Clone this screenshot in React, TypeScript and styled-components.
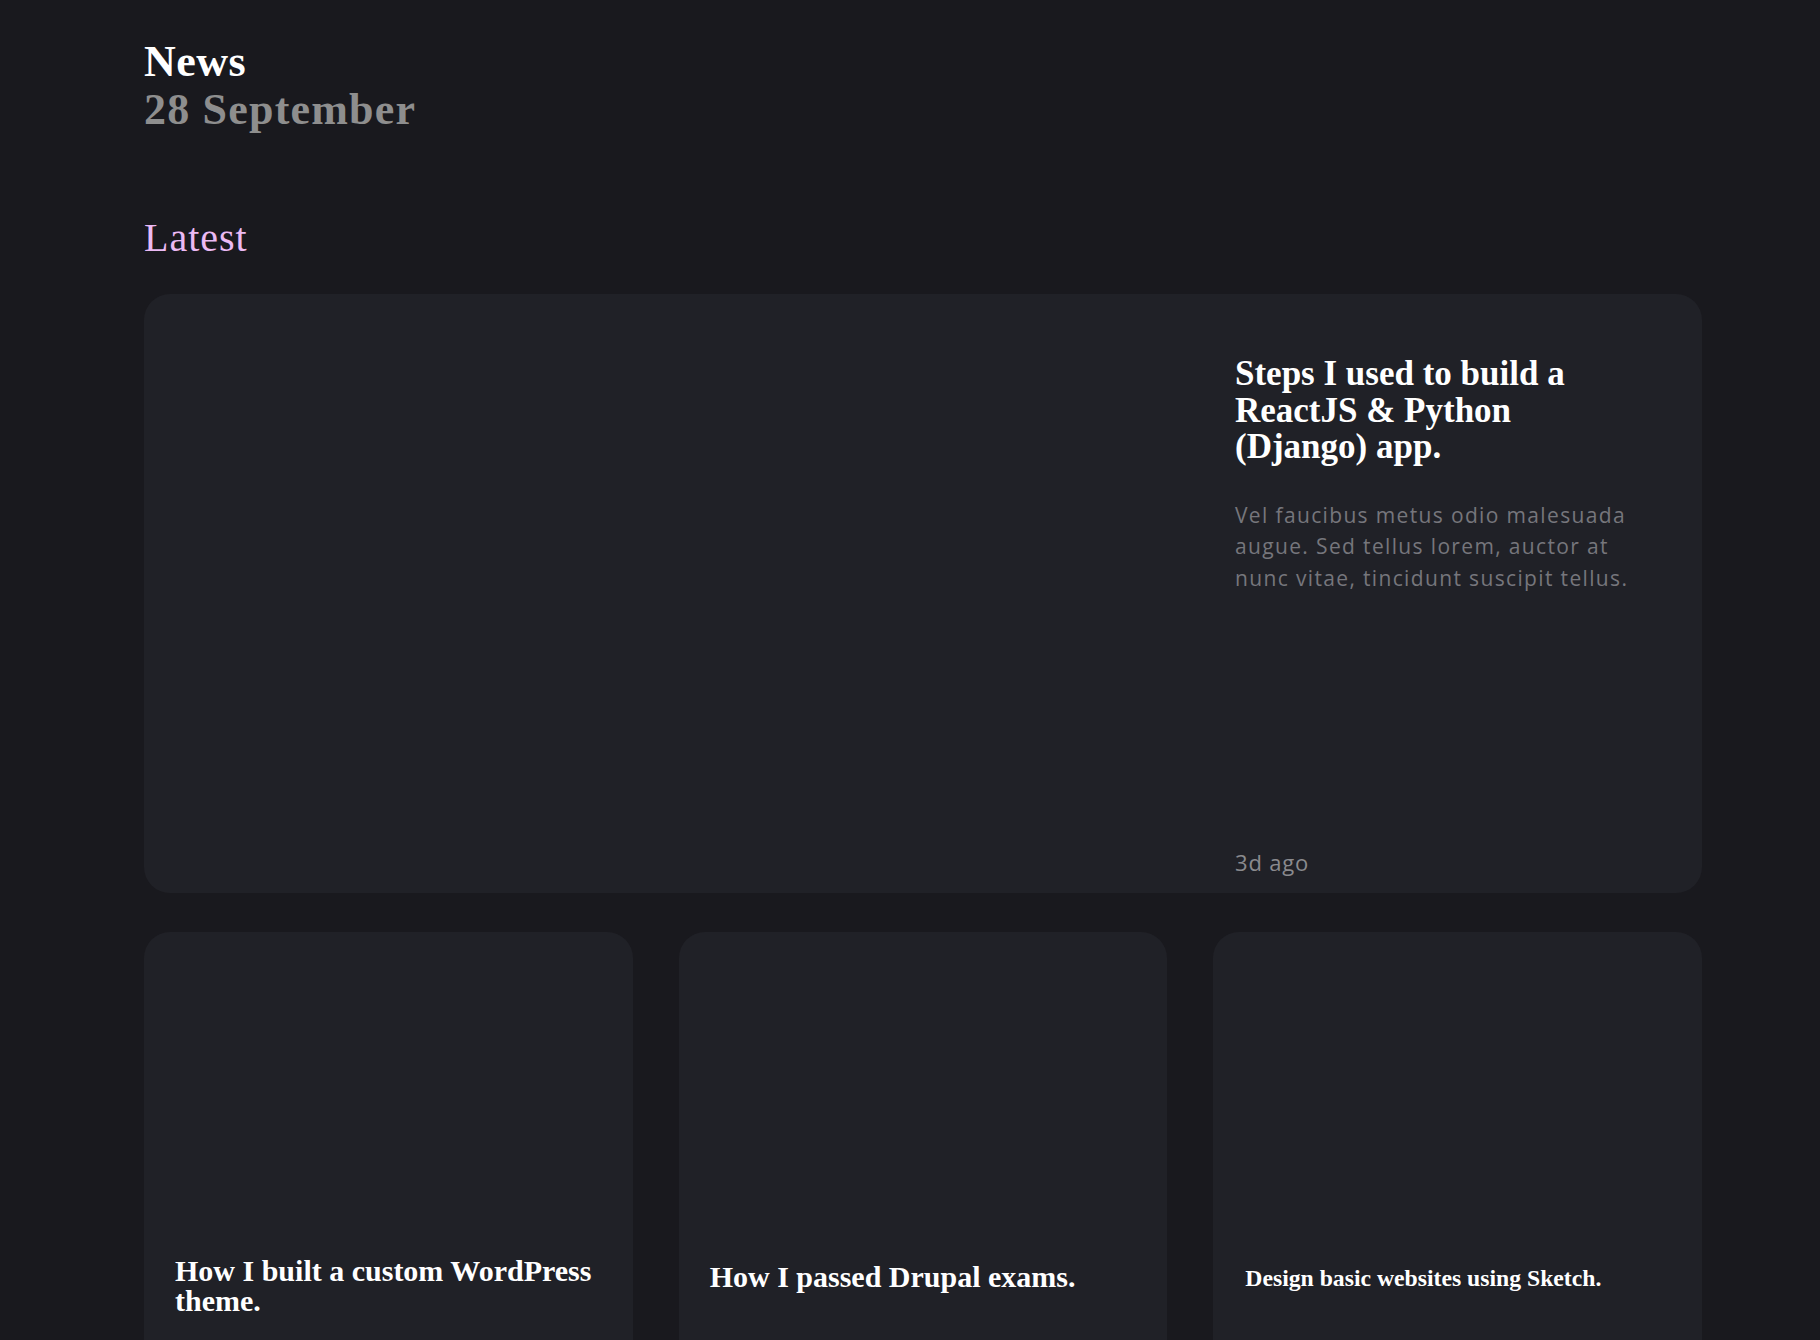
import React from "react";
import styled, { createGlobalStyle } from "styled-components";

const GlobalStyle = createGlobalStyle`
  html, body {
    margin: 0;
    padding: 0;
    background: #19191e;
  }
  body {
    font-family: "Open Sans", "Liberation Sans", sans-serif;
    color: #ffffff;
  }
  * { box-sizing: border-box; }
`;

const serif = `"Liberation Serif", "Times New Roman", serif`;
const sans = `"Open Sans", "Noto Sans", sans-serif`;

const Page = styled.main`
  width: 1820px;
  min-height: 1340px;
  padding: 38px 118px 0 144px;
  background: #19191e;
  overflow: hidden;
`;

const Header = styled.header`
  display: flex;
  flex-direction: column;
`;

const PageTitle = styled.h1`
  margin: 0;
  font-family: ${serif};
  font-weight: 700;
  font-size: 44px;
  line-height: 48px;
  letter-spacing: 0.5px;
  color: #ffffff;
`;

const PageDate = styled.h2`
  margin: 0;
  font-family: ${serif};
  font-weight: 700;
  font-size: 44px;
  line-height: 48px;
  letter-spacing: 1.2px;
  color: #8e8e8e;
`;

const SectionTitle = styled.h3`
  margin: 80px 0 32px;
  font-family: ${serif};
  font-weight: 400;
  font-size: 40px;
  line-height: 48px;
  letter-spacing: 1px;
  color: #ebbaf4;
`;

const FeatureCard = styled.article`
  display: grid;
  grid-template-columns: 1fr 400px;
  height: 599px;
  padding-right: 67px;
  background: #202127;
  border-radius: 26px;
`;

const ImageArea = styled.div`
  min-height: 100%;
`;

const FeatureBody = styled.div`
  display: flex;
  flex-direction: column;
  padding: 62px 0 15px;
`;

const FeatureTitle = styled.h4`
  margin: 0;
  font-family: ${serif};
  font-weight: 700;
  font-size: 35px;
  line-height: 36.5px;
  color: #ffffff;
`;

const Excerpt = styled.p`
  margin: 34px 0 0;
  font-family: ${sans};
  font-size: 21px;
  line-height: 31.5px;
  letter-spacing: 1.35px;
  color: #76767c;
`;

const Meta = styled.span`
  margin-top: auto;
  font-family: ${sans};
  font-size: 22px;
  line-height: 32px;
  letter-spacing: 0.8px;
  color: #8a8a8e;
`;

const CardGrid = styled.section`
  display: grid;
  grid-template-columns: repeat(3, 1fr);
  gap: 46px;
  margin-top: 39px;
`;

const Card = styled.article`
  display: flex;
  flex-direction: column;
  height: 520px;
  padding: 0 31px;
  background: #202127;
  border-radius: 26px;
`;

const CardImage = styled.div`
  height: 324px;
  flex: none;
`;

type Variant = "wide" | "single" | "small";

const CardTitle = styled.h4<{ $variant: Variant }>`
  margin: 0;
  font-family: ${serif};
  font-weight: 700;
  color: #ffffff;
  font-size: ${(p) => (p.$variant === "small" ? 23.7 : 30)}px;
  line-height: ${(p) => (p.$variant === "wide" ? 30 : p.$variant === "single" ? 42 : 44)}px;
  padding-left: ${(p) => (p.$variant === "small" ? 1 : 0)}px;
`;

const cards: { title: string; variant: Variant }[] = [
  { title: "How I built a custom WordPress theme.", variant: "wide" },
  { title: "How I passed Drupal exams.", variant: "single" },
  { title: "Design basic websites using Sketch.", variant: "small" },
];

export default function App() {
  return (
    <>
      <GlobalStyle />
      <Page>
        <Header>
          <PageTitle>News</PageTitle>
          <PageDate>28 September</PageDate>
        </Header>
        <SectionTitle>Latest</SectionTitle>
        <FeatureCard>
          <ImageArea />
          <FeatureBody>
            <FeatureTitle>Steps I used to build a ReactJS &amp; Python (Django) app.</FeatureTitle>
            <Excerpt>
              Vel faucibus metus odio malesuada augue. Sed tellus lorem, auctor at nunc vitae, tincidunt suscipit tellus.
            </Excerpt>
            <Meta>3d ago</Meta>
          </FeatureBody>
        </FeatureCard>
        <CardGrid>
          {cards.map((c) => (
            <Card key={c.title}>
              <CardImage />
              <CardTitle $variant={c.variant}>{c.title}</CardTitle>
            </Card>
          ))}
        </CardGrid>
      </Page>
    </>
  );
}
